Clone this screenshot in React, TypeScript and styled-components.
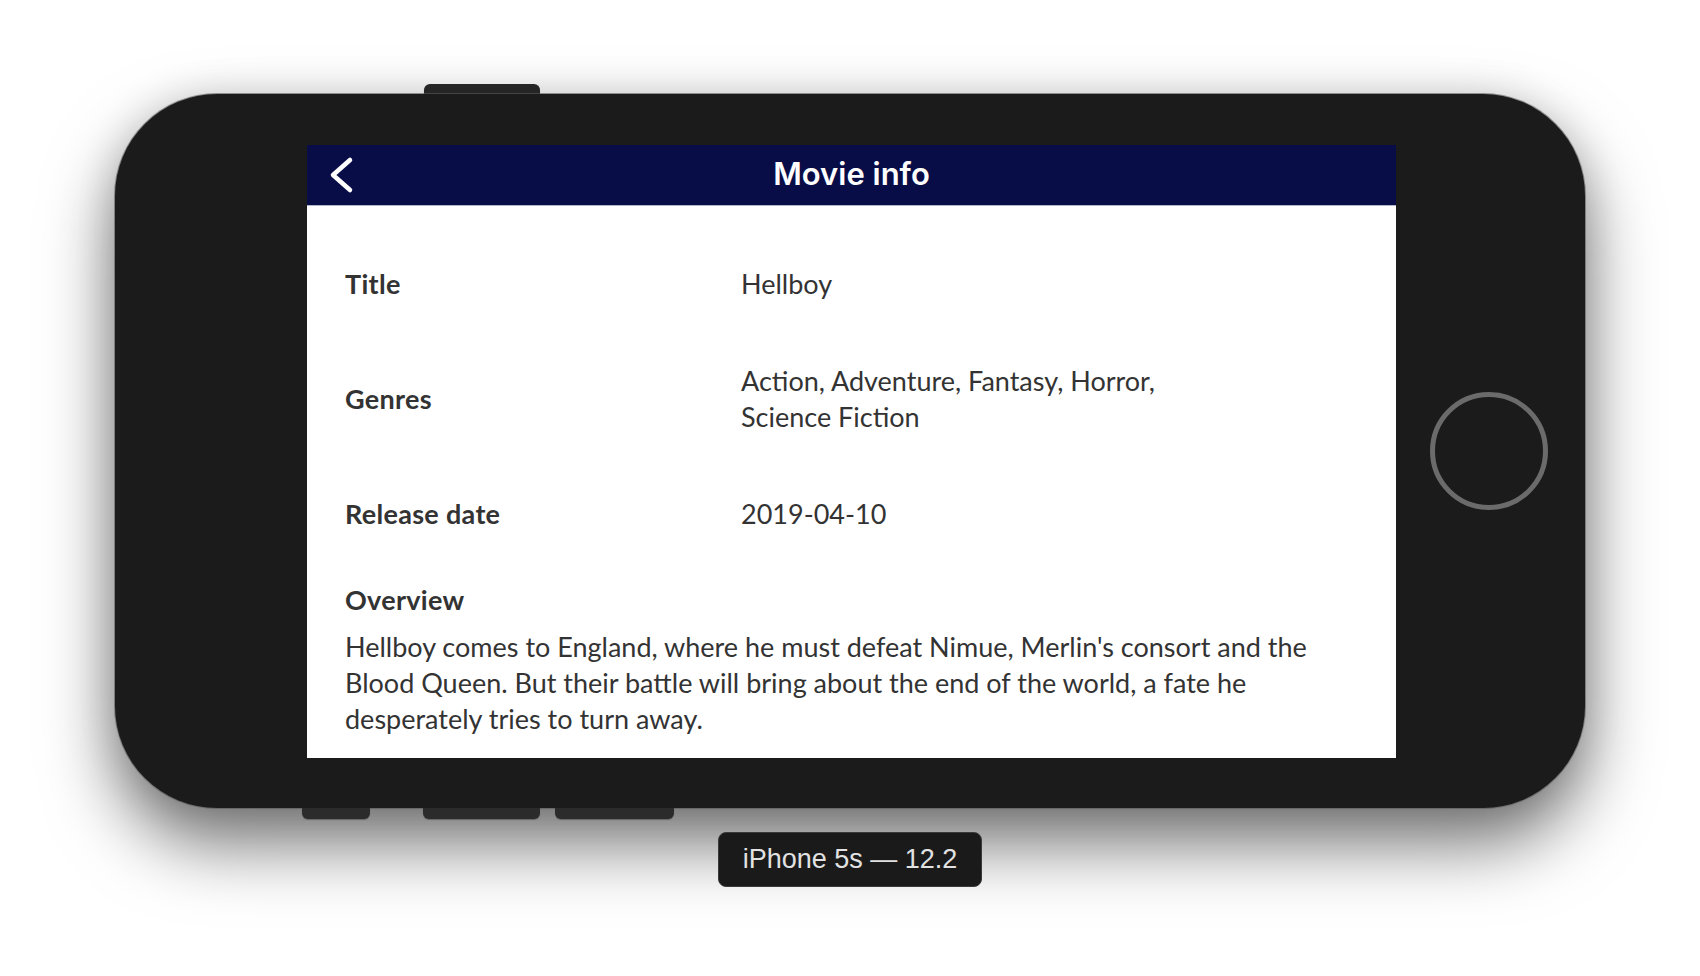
import React from 'react';
import styled, { createGlobalStyle } from 'styled-components';

const GlobalStyle = createGlobalStyle`
    html, body {
        margin: 0;
        padding: 0;
        background: #ffffff;
    }
    * {
        box-sizing: border-box;
    }
`;

const Page = styled.div`
    width: 1700px;
    height: 976px;
    display: flex;
    flex-direction: column;
    align-items: center;
    padding-top: 84px;
    overflow: hidden;
`;

const Device = styled.div`
    display: flex;
    flex-direction: column;
    width: 1470px;
`;

const ButtonRow = styled.div<{ $pad: number }>`
    display: flex;
    height: ${(p) => (p.$pad > 250 ? 10 : 11)}px;
    padding-left: ${(p) => p.$pad}px;
`;

const SideButton = styled.div<{ $w: number; $gap?: number; $top?: boolean }>`
    width: ${(p) => p.$w}px;
    margin-left: ${(p) => p.$gap || 0}px;
    height: 100%;
    background: #2b2b2b;
    border-radius: ${(p) => (p.$top ? '6px 6px 0 0' : '0 0 6px 6px')};
    box-shadow: 0 1px 1px rgba(0, 0, 0, 0.3);
`;

const Body = styled.div`
    display: grid;
    grid-template-columns: 192px 1089px 1fr;
    align-items: center;
    height: 714px;
    background: #1b1b1b;
    border-radius: 102px;
    box-shadow: 0 0 0 1px rgba(90, 90, 90, 0.6), 0 36px 70px rgba(0, 0, 0, 0.55), 0 0 40px rgba(0, 0, 0, 0.12);
`;

const Screen = styled.div`
    height: 613px;
    background: #ffffff;
    display: flex;
    flex-direction: column;
    overflow: hidden;
`;

const HomeArea = styled.div`
    display: flex;
    justify-content: center;
    align-items: center;
    padding-right: 4px;
`;

const HomeButton = styled.div`
    width: 118px;
    height: 118px;
    border-radius: 50%;
    border: 5px solid #6b6b6b;
`;

const NavBar = styled.div`
    display: grid;
    grid-template-columns: 1fr auto 1fr;
    align-items: center;
    height: 61px;
    flex-shrink: 0;
    background: #090d47;
    border-bottom: 1px solid #b4b6cc;
`;

const BackButton = styled.div`
    display: flex;
    align-items: center;
    padding-left: 22px;
`;

const NavTitle = styled.div`
    font-family: 'Inter', 'Roboto', sans-serif;
    font-weight: 600;
    font-size: 31px;
    color: #ffffff;
    padding-bottom: 3px;
`;

const Content = styled.div`
    display: flex;
    flex-direction: column;
    padding: 21px 38px 0;
    font-family: 'Lato', 'Open Sans', sans-serif;
    color: #333333;
    font-size: 27px;
`;

const InfoRow = styled.div`
    display: flex;
    align-items: center;
    height: 115px;
`;

const Label = styled.div`
    width: 396px;
    flex-shrink: 0;
    font-weight: 700;
    letter-spacing: 0.3px;
    line-height: 36px;
`;

const Value = styled.div`
    width: 480px;
    line-height: 36px;
`;

const SectionTitle = styled.div`
    font-weight: 700;
    letter-spacing: 0.3px;
    line-height: 36px;
    margin-top: 10px;
`;

const Paragraph = styled.p`
    margin: 11px 0 0;
    line-height: 36px;
`;

const DeviceLabel = styled.div`
    margin-top: 13px;
    width: 264px;
    height: 55px;
    display: flex;
    align-items: center;
    justify-content: center;
    background: #1a1a1a;
    border: 1px solid #3a3a3a;
    border-radius: 8px;
    color: #e2e2e2;
    font-family: 'Liberation Sans', Arial, sans-serif;
    font-size: 27px;
`;

const movie = {
    title: 'Hellboy',
    genres: 'Action, Adventure, Fantasy, Horror, Science Fiction',
    releaseDate: '2019-04-10',
    overview:
        "Hellboy comes to England, where he must defeat Nimue, Merlin's consort and the Blood Queen. But their battle will bring about the end of the world, a fate he desperately tries to turn away.",
};

const App = () => {
    return (
        <>
            <GlobalStyle />
            <Page>
                <Device>
                    <ButtonRow $pad={309}>
                        <SideButton $w={116} $top />
                    </ButtonRow>
                    <Body>
                        <div />
                        <Screen>
                            <NavBar>
                                <BackButton>
                                    <svg width="26" height="40" viewBox="0 0 26 40">
                                        <polyline
                                            points="21,5 4,20 21,35"
                                            fill="none"
                                            stroke="#ffffff"
                                            strokeWidth="4.5"
                                            strokeLinecap="round"
                                            strokeLinejoin="round"
                                        />
                                    </svg>
                                </BackButton>
                                <NavTitle>Movie info</NavTitle>
                                <div />
                            </NavBar>
                            <Content>
                                <InfoRow>
                                    <Label>Title</Label>
                                    <Value>{movie.title}</Value>
                                </InfoRow>
                                <InfoRow>
                                    <Label>Genres</Label>
                                    <Value>{movie.genres}</Value>
                                </InfoRow>
                                <InfoRow>
                                    <Label>Release date</Label>
                                    <Value>{movie.releaseDate}</Value>
                                </InfoRow>
                                <SectionTitle>Overview</SectionTitle>
                                <Paragraph>{movie.overview}</Paragraph>
                            </Content>
                        </Screen>
                        <HomeArea>
                            <HomeButton />
                        </HomeArea>
                    </Body>
                    <ButtonRow $pad={187}>
                        <SideButton $w={68} />
                        <SideButton $w={117} $gap={53} />
                        <SideButton $w={119} $gap={15} />
                    </ButtonRow>
                </Device>
                <DeviceLabel>iPhone 5s — 12.2</DeviceLabel>
            </Page>
        </>
    );
};

export default App;
